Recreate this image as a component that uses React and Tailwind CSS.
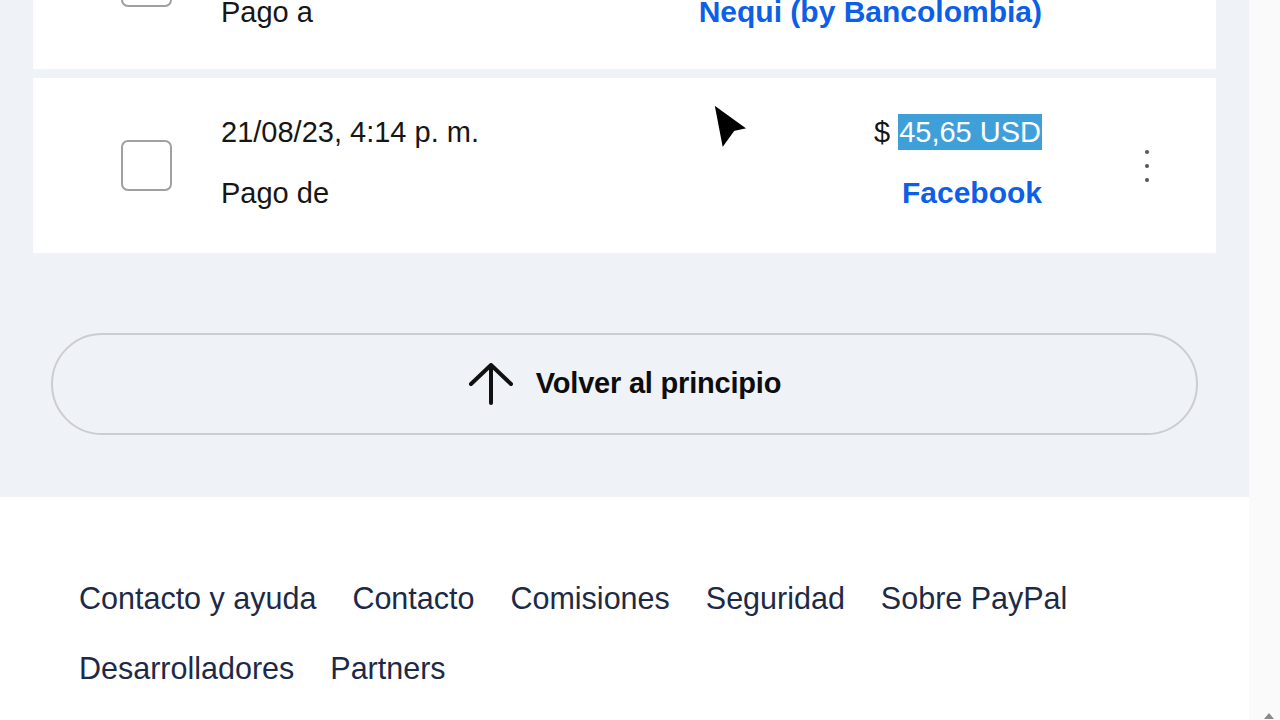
import React from 'react';

const font = { fontFamily: '"Liberation Sans", Arial, sans-serif' };

const Checkbox = () => (
  <div className="w-[51px] h-[51px] shrink-0 rounded-[7px] border-2 border-[#a0a0a0] bg-white" />
);

const Kebab = () => (
  <div className="flex flex-col items-center gap-[10px]">
    <span className="w-[4px] h-[4px] rounded-full bg-[#555]" />
    <span className="w-[4px] h-[4px] rounded-full bg-[#555]" />
    <span className="w-[4px] h-[4px] rounded-full bg-[#555]" />
  </div>
);

const Row = ({ date, label, amount, party, selected, shift }) => (
  <div className="flex items-center h-[175px] bg-white pl-[88px]">
    <Checkbox />
    <div className={`flex flex-1 items-center ml-[49px] ${shift ? '-mt-[1px]' : '-mt-[6px]'}`}>
      <div className="flex flex-col flex-1 gap-[25px] text-[#161616]">
        <div className="text-[29px] leading-[36px]">{date}</div>
        <div className="text-[29px] leading-[36px]">{label}</div>
      </div>
      <div className="flex flex-col items-end gap-[25px]">
        <div className="text-[29px] leading-[36px] text-[#161616]">
          {selected ? (
            <>
              $ <span className="bg-[#3fa0d9] text-white px-[1px] py-[2px]">{amount}</span>
            </>
          ) : (
            <>$ {amount}</>
          )}
        </div>
        <div className="text-[30px] leading-[36px] font-bold text-[#0c5fe6]">{party}</div>
      </div>
    </div>
    <div className="w-[174px] pl-[103px] flex">
      <Kebab />
    </div>
  </div>
);

const ArrowUp = () => (
  <svg width="46" height="42" viewBox="0 0 46 42" fill="none">
    <path d="M3 21 L23 2 L43 21" stroke="#111" strokeWidth="4" strokeLinecap="round" strokeLinejoin="round" />
    <path d="M23 3 V40" stroke="#111" strokeWidth="4" strokeLinecap="round" />
  </svg>
);

const Cursor = () => (
  <svg className="absolute left-[709px] top-[100px]" width="44" height="54" viewBox="0 0 44 54">
    <path d="M4 3 L40 29 L26 32 L13 50 Z" fill="#000" stroke="#fff" strokeWidth="2.5" strokeLinejoin="round" />
  </svg>
);

export default function App() {
  return (
    <div className="relative flex w-[1280px] h-[720px] overflow-hidden bg-white" style={font}>
      <div className="w-[1249px] flex flex-col">
        <div className="bg-[#eff2f6] px-[33px] pb-[62px]">
          <div className="flex flex-col gap-[9px] -mt-[106px]">
            <Row date="21/08/23, 4:20 p. m." label="Pago a" amount="45,65 USD" party="Nequi (by Bancolombia)" shift />
            <Row date="21/08/23, 4:14 p. m." label="Pago de" amount="45,65 USD" party="Facebook" selected />
          </div>
          <button className="mt-[80px] mx-[18px] w-[1147px] h-[102px] rounded-full border-2 border-[#cbcdd0] flex items-center justify-center gap-[22px]">
            <ArrowUp />
            <span className="text-[29px] font-bold text-[#0d0d0d] tracking-[-0.2px]">Volver al principio</span>
          </button>
        </div>
        <footer className="flex-1 bg-white pl-[79px] pt-[66px] text-[30.5px] text-[#1d2a47]">
          <div className="flex gap-x-[36px] leading-[70px]">
            <span>Contacto y ayuda</span>
            <span>Contacto</span>
            <span>Comisiones</span>
            <span>Seguridad</span>
            <span>Sobre PayPal</span>
          </div>
          <div className="flex gap-x-[36px] leading-[70px]">
            <span>Desarrolladores</span>
            <span>Partners</span>
          </div>
        </footer>
      </div>
      <div className="w-[31px] bg-[#fafafa] flex flex-col justify-end items-center">
        <div className="w-0 h-0 border-l-[5px] border-r-[5px] border-b-[6px] border-l-transparent border-r-transparent border-b-[#8a8a8a] mb-[1px] ml-[8px]" />
      </div>
      <Cursor />
    </div>
  );
}
